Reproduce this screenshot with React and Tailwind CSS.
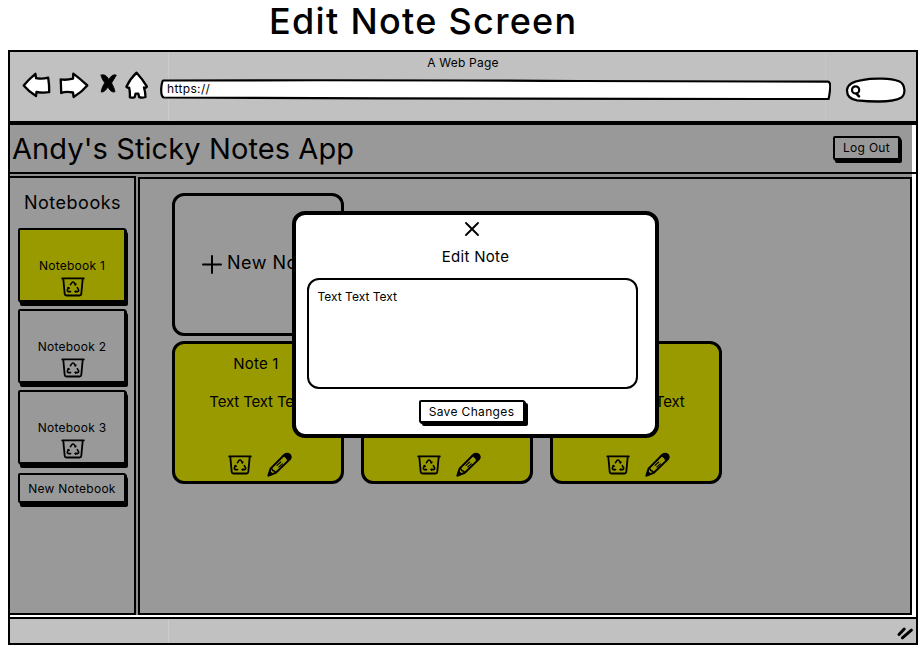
import React from 'react';

function TrashIcon({ className = '' }) {
  return (
    <svg className={`block shrink-0 ${className}`} width="24" height="20" viewBox="0 0 24 20" fill="none" stroke="#000" strokeLinecap="round" strokeLinejoin="round">
      <path d="M1.2 1.4H22.8" strokeWidth="1.8" />
      <path d="M2.3 1.8L3.7 16.8Q3.9 18.5 5.4 18.5H18.6Q20.1 18.5 20.3 16.8L21.7 1.8" strokeWidth="1.8" />
      <path d="M9.4 7.7L10.9 5.6Q12 4.4 13.1 5.6L14.6 7.7" strokeWidth="1.5" />
      <path d="M7.7 10.6L6.5 12.6Q5.9 14.3 7.5 14.6H9.6" strokeWidth="1.6" />
      <path d="M16.3 10.6L17.5 12.6Q18.1 14.3 16.5 14.6H14.2" strokeWidth="1.6" />
      <path d="M14.9 6.6V7.9H13.6M6.5 10.8L7.8 10.4L8.4 11.5M14.7 13.7L13.8 14.6L14.7 15.4" strokeWidth="1" />
    </svg>
  );
}

function PencilIcon() {
  return (
    <svg className="block shrink-0" width="25" height="25" viewBox="0 0 25 25" fill="none" stroke="#000" strokeLinecap="round" strokeLinejoin="round">
      <path d="M1.4 23.6L3.6 16.6L17.4 2.8Q20 .6 22.6 2.7Q24.6 5 22.7 7.4L8.8 20.8Z" strokeWidth="2" />
      <path d="M15.8 4L18.6 1.8Q21.4 .6 23.4 2.9Q24.6 5.2 22.9 7.3L20.6 9.4Q20.4 5.1 15.8 4Z" fill="#000" strokeWidth="1" />
      <path d="M1.4 23.6L2.7 19.3L5.8 21.9Z" fill="#000" />
      <path d="M3.9 16.6Q5.6 17 5.8 18.6Q7.6 18.9 8.6 20.6" strokeWidth="1.5" />
      <path d="M10 13.4L13.8 10M11.8 15L15.4 11.8" strokeWidth="1.1" />
    </svg>
  );
}

function BrowserBar() {
  return (
    <div className="relative h-[69px] shrink-0 bg-[#c1c1c1]">
      <div className="absolute left-[158px] top-0 h-full w-px bg-[#cbcbcb]" />
      <div className="absolute left-[815px] top-0 h-full w-px bg-[#c7c7c7]" />
      <div className="relative flex h-[17px] items-center justify-center text-[12px] leading-5 tracking-[0.2px]">
        <span className="mt-[5px]">A Web Page</span>
      </div>
      <div className="relative flex items-start pl-3">
        <svg className="mt-[2px] block h-7 w-[126px] shrink-0" viewBox="0 0 126 28" fill="#fff" stroke="#000" strokeWidth="2.3" strokeLinejoin="round" strokeLinecap="round">
          <path d="M1.7 14.5Q6 9 13.4 2.8L14.1 7.2Q20 8.4 26.2 6.7Q27.4 14 27.2 21.2Q20 22.2 14.5 20.8L14 25Q7 20.8 1.7 14.5Z" />
          <path d="M38.7 8.4Q44 9.4 51 7.7L51.3 2.6Q58.5 8 65.3 14.4Q60 20.8 51.6 26L51 21.5Q44 20.2 39.2 22Q39 14 38.7 8.4Z" />
          <path d="M114.6 1.7Q120.5 8.2 125 15.6Q124 17.4 122 16.5Q123.4 21 123.5 26Q120 27.2 117.2 26.1L116.3 22.6H113.6L112.6 26.2Q110 27.2 107.8 26.2Q108.2 21 107.1 16.6Q105.4 17.2 104.4 15.8Q108 8 114.6 1.7Z" />
          <g fill="#000" stroke="#000" strokeWidth="0.8">
            <path d="M79.1 4.2C81.5 2.6 84.9 4.8 86.8 8.5C89 4.9 91.6 3 94.3 4.2C92.8 7 91 9.4 89.6 12C91.4 15.6 92.8 18.4 92.9 20.8C90 21.9 87.3 19 85.9 15.8C84.4 18.8 82 21.3 79.2 21.1C79.4 17.6 81 14.6 82.7 11.8C80.6 8.8 79.4 6.6 79.1 4.2Z" />
          </g>
        </svg>
        <div className="relative ml-3 mt-[10px] h-[21px] w-[671px]">
          <svg className="block h-[21px] w-[671px]" viewBox="0 0 671 21" fill="#fff" stroke="#000" strokeWidth="2.2" strokeLinejoin="round">
            <path d="M3 1.5Q220 .8 420 2L668 2.7Q671 3 670 11Q669.5 16 668.5 20.2Q440 20.5 220 19.4L4 18.5Q1 18 1.2 10Q1.5 4 3 1.5Z" />
          </svg>
          <span className="absolute left-[7px] top-[1px] text-[12px] leading-[18px] tracking-[0.35px]">https://</span>
        </div>
        <svg className="ml-[14px] mt-2 block h-[26px] w-[61px] shrink-0" viewBox="0 0 61 26" fill="#fff" stroke="#000" strokeWidth="2.2" strokeLinecap="round">
          <path d="M17 3.1C29 .8 46 1.3 54 4.3C60.5 7 61 17.4 56 20.8C47 25.8 23 24.5 12 23.4C4.5 22.2 1.8 18 2 12.8C2.5 7 8.5 4.4 17 3.1Z" />
          <circle cx="10.6" cy="12.9" r="3.6" />
          <path d="M11.4 16.6L14 19.4" strokeWidth="2.6" />
        </svg>
      </div>
    </div>
  );
}

function Notebook({ name, active }) {
  return (
    <div className={`flex h-[74px] w-[108px] flex-col items-center rounded-[2px] border-2 border-black pt-[27px] shadow-[1px_1px_0_#000,2px_4px_0_#000] ${active ? 'bg-[#999900]' : 'bg-[#999999]'}`}>
      <span className="text-[12px] leading-[18px] tracking-[0.25px]">{name}</span>
      <TrashIcon className="ml-[2px] mt-[2px]" />
    </div>
  );
}

function NoteCard({ title }) {
  return (
    <div className="flex h-[143px] w-[172px] flex-col items-center rounded-[12px] border-[3px] border-black bg-[#999900] pt-[10px]">
      <span className="mr-[4px] text-[15px] leading-5 tracking-[0.2px]">{title}</span>
      <span className="mt-[18px] text-[15px] leading-5 -tracking-[0.15px]">Text Text Text</span>
      <div className="ml-[3px] mt-[40px] flex items-center gap-[15px]">
        <TrashIcon />
        <PencilIcon />
      </div>
    </div>
  );
}

function EditModal() {
  return (
    <div className="absolute left-[292px] top-[211px] flex h-[227px] w-[367px] flex-col items-center rounded-[13px] border-4 border-black bg-white">
      <svg className="mr-[7px] mt-[6px] block" width="16" height="16" viewBox="0 0 16 16" stroke="#000" strokeWidth="1.9" strokeLinecap="round">
        <path d="M2 2L14 14M14 2L2 14" />
      </svg>
      <h2 className="mt-[10px] text-[15px] leading-5 tracking-[0.3px]">Edit Note</h2>
      <div className="mr-[7px] mt-[11px] h-[111px] w-[331px] rounded-[12px] border-2 border-black px-[9px] pt-[7px] text-[12px] leading-5">Text Text Text</div>
      <button className="mr-[8px] mt-[11px] h-[23px] w-[106px] rounded-[2px] border-2 border-black bg-white text-[12px] leading-[19px] tracking-[0.35px] shadow-[1px_1px_0_#000,3px_3px_0_#000]">Save Changes</button>
    </div>
  );
}

export default function App() {
  return (
    <div className="relative flex h-[651px] w-[922px] flex-col overflow-hidden bg-white font-['Inter','Liberation_Sans',sans-serif] text-black">
      <h1 className="h-[50px] shrink-0 whitespace-nowrap pl-[269px] text-[36px] font-medium leading-[42px] tracking-[1.3px]">Edit Note Screen</h1>
      <div className="ml-2 flex h-[595px] w-[910px] flex-col border-2 border-black bg-white">
        <BrowserBar />
        <header className="flex h-[53px] w-[908px] shrink-0 items-center border-b-2 border-r-2 border-t-4 border-black bg-white">
          <div className="flex h-full w-[902px] items-center justify-between bg-[#999999] pl-[2px] pr-[12px]">
            <span className="whitespace-nowrap text-[29px] leading-[46px] tracking-[0.1px]">Andy&apos;s Sticky Notes App</span>
            <button className="-mt-[2px] h-[24px] w-[67px] rounded-[2px] border-2 border-black text-[12px] leading-[20px] tracking-[0.3px] shadow-[1px_1px_0_#000,2px_3px_0_#000]">Log Out</button>
          </div>
        </header>
        <div className="flex h-[441px] w-[902px] shrink-0 gap-[2px] bg-[#8e8e8e] pt-[2px]">
          <aside className="flex w-[126px] shrink-0 flex-col border-b-2 border-r-2 border-t-2 border-black bg-[#999999] pl-2">
            <h2 className="mt-[12px] whitespace-nowrap pl-[6px] text-[18px] leading-[26px] tracking-[0.5px]">Notebooks</h2>
            <div className="mt-3 flex flex-col gap-[7px]">
              <Notebook name="Notebook 1" active />
              <Notebook name="Notebook 2" />
              <Notebook name="Notebook 3" />
              <button className="mt-[2px] h-[30px] w-[108px] whitespace-nowrap rounded-[2px] border-2 border-black pt-px text-[12px] leading-[25px] tracking-[0.25px] shadow-[1px_1px_0_#000,2px_4px_0_#000]">New Notebook</button>
            </div>
          </aside>
          <main className="mt-px flex-1 border-2 border-black bg-[#999999] pl-[32px] pt-[14px]">
            <div className="grid grid-cols-[repeat(3,172px)] gap-x-[17px] gap-y-[5px]">
              <div className="col-span-3 flex h-[143px] w-[172px] items-center rounded-[12px] border-[3px] border-black pl-[26px]">
                <svg className="-mt-[2px] block shrink-0" width="21" height="20" viewBox="0 0 21 20" stroke="#000" strokeWidth="2" strokeLinecap="round">
                  <path d="M2 10.5H20M11 2V19" />
                </svg>
                <span className="-mt-[3px] ml-[5px] whitespace-nowrap text-[18px] leading-6 tracking-[0.5px]">New Note</span>
              </div>
              <NoteCard title="Note 1" />
              <NoteCard title="Note 2" />
              <NoteCard title="Note 3" />
            </div>
          </main>
        </div>
        <footer className="relative mt-[2px] flex flex-1 items-center justify-end border-t-2 border-black bg-[#c1c1c1] pr-[2px]">
          <svg className="mt-1 block" width="18" height="14" viewBox="0 0 18 14" stroke="#000" strokeWidth="3" strokeLinecap="round">
            <path d="M3 8.5L8.2 3M6.4 11.8L15.4 4.2" />
          </svg>
          <div className="absolute left-[158px] top-0 h-full w-px bg-[#cbcbcb]" />
        </footer>
      </div>
      <EditModal />
    </div>
  );
}
